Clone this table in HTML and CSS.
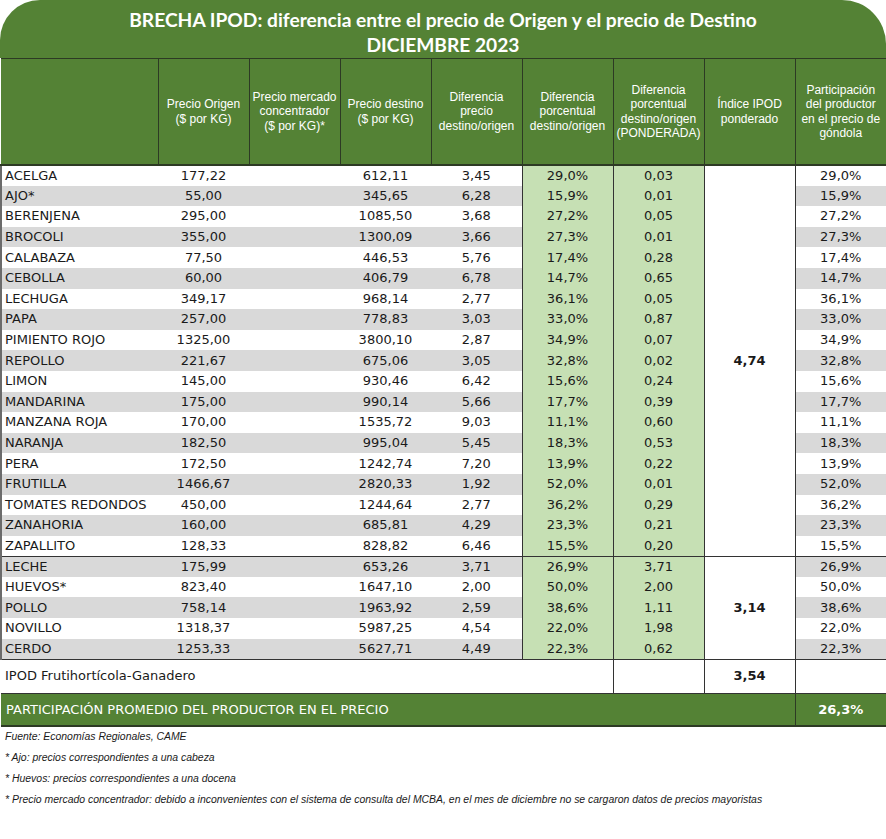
FILE: index.html
```html
<!DOCTYPE html>
<html lang="es">
<head>
<meta charset="utf-8">
<title>BRECHA IPOD</title>
<link rel="stylesheet" href="styles.css">
</head>
<body>
<div class="sheet">
  <div class="title">
    <div>BRECHA IPOD: diferencia entre el precio de Origen y el precio de Destino</div>
    <div>DICIEMBRE 2023</div>
  </div>
  <table class="grid">
    <colgroup>
      <col class="c-name"><col class="c-n"><col class="c-n"><col class="c-n"><col class="c-n"><col class="c-n"><col class="c-n"><col class="c-n"><col class="c-n">
    </colgroup>
    <thead>
      <tr class="head">
        <th></th>
        <th>Precio Origen<br>($ por KG)</th>
        <th>Precio mercado<br>concentrador<br>($ por KG)*</th>
        <th>Precio destino<br>($ por KG)</th>
        <th>Diferencia<br>precio<br>destino/origen</th>
        <th>Diferencia<br>porcentual<br>destino/origen</th>
        <th>Diferencia<br>porcentual<br>destino/origen<br>(PONDERADA)</th>
        <th>Índice IPOD<br>ponderado</th>
        <th>Participación<br>del productor<br>en el precio de<br>góndola</th>
      </tr>
    </thead>
    <tbody>
      <tr><td class="name">ACELGA</td><td>177,22</td><td></td><td>612,11</td><td class="dif">3,45</td><td class="g">29,0%</td><td class="g">0,03</td><td class="ipod" rowspan="19">4,74</td><td class="part">29,0%</td></tr>
      <tr class="alt"><td class="name">AJO*</td><td>55,00</td><td></td><td>345,65</td><td class="dif">6,28</td><td class="g">15,9%</td><td class="g">0,01</td><td class="part">15,9%</td></tr>
      <tr><td class="name">BERENJENA</td><td>295,00</td><td></td><td>1085,50</td><td class="dif">3,68</td><td class="g">27,2%</td><td class="g">0,05</td><td class="part">27,2%</td></tr>
      <tr class="alt"><td class="name">BROCOLI</td><td>355,00</td><td></td><td>1300,09</td><td class="dif">3,66</td><td class="g">27,3%</td><td class="g">0,01</td><td class="part">27,3%</td></tr>
      <tr><td class="name">CALABAZA</td><td>77,50</td><td></td><td>446,53</td><td class="dif">5,76</td><td class="g">17,4%</td><td class="g">0,28</td><td class="part">17,4%</td></tr>
      <tr class="alt"><td class="name">CEBOLLA</td><td>60,00</td><td></td><td>406,79</td><td class="dif">6,78</td><td class="g">14,7%</td><td class="g">0,65</td><td class="part">14,7%</td></tr>
      <tr><td class="name">LECHUGA</td><td>349,17</td><td></td><td>968,14</td><td class="dif">2,77</td><td class="g">36,1%</td><td class="g">0,05</td><td class="part">36,1%</td></tr>
      <tr class="alt"><td class="name">PAPA</td><td>257,00</td><td></td><td>778,83</td><td class="dif">3,03</td><td class="g">33,0%</td><td class="g">0,87</td><td class="part">33,0%</td></tr>
      <tr><td class="name">PIMIENTO ROJO</td><td>1325,00</td><td></td><td>3800,10</td><td class="dif">2,87</td><td class="g">34,9%</td><td class="g">0,07</td><td class="part">34,9%</td></tr>
      <tr class="alt"><td class="name">REPOLLO</td><td>221,67</td><td></td><td>675,06</td><td class="dif">3,05</td><td class="g">32,8%</td><td class="g">0,02</td><td class="part">32,8%</td></tr>
      <tr><td class="name">LIMON</td><td>145,00</td><td></td><td>930,46</td><td class="dif">6,42</td><td class="g">15,6%</td><td class="g">0,24</td><td class="part">15,6%</td></tr>
      <tr class="alt"><td class="name">MANDARINA</td><td>175,00</td><td></td><td>990,14</td><td class="dif">5,66</td><td class="g">17,7%</td><td class="g">0,39</td><td class="part">17,7%</td></tr>
      <tr><td class="name">MANZANA ROJA</td><td>170,00</td><td></td><td>1535,72</td><td class="dif">9,03</td><td class="g">11,1%</td><td class="g">0,60</td><td class="part">11,1%</td></tr>
      <tr class="alt"><td class="name">NARANJA</td><td>182,50</td><td></td><td>995,04</td><td class="dif">5,45</td><td class="g">18,3%</td><td class="g">0,53</td><td class="part">18,3%</td></tr>
      <tr><td class="name">PERA</td><td>172,50</td><td></td><td>1242,74</td><td class="dif">7,20</td><td class="g">13,9%</td><td class="g">0,22</td><td class="part">13,9%</td></tr>
      <tr class="alt"><td class="name">FRUTILLA</td><td>1466,67</td><td></td><td>2820,33</td><td class="dif">1,92</td><td class="g">52,0%</td><td class="g">0,01</td><td class="part">52,0%</td></tr>
      <tr><td class="name">TOMATES REDONDOS</td><td>450,00</td><td></td><td>1244,64</td><td class="dif">2,77</td><td class="g">36,2%</td><td class="g">0,29</td><td class="part">36,2%</td></tr>
      <tr class="alt"><td class="name">ZANAHORIA</td><td>160,00</td><td></td><td>685,81</td><td class="dif">4,29</td><td class="g">23,3%</td><td class="g">0,21</td><td class="part">23,3%</td></tr>
      <tr><td class="name">ZAPALLITO</td><td>128,33</td><td></td><td>828,82</td><td class="dif">6,46</td><td class="g">15,5%</td><td class="g">0,20</td><td class="part">15,5%</td></tr>
      <tr class="alt first"><td class="name">LECHE</td><td>175,99</td><td></td><td>653,26</td><td class="dif">3,71</td><td class="g">26,9%</td><td class="g">3,71</td><td class="ipod" rowspan="5">3,14</td><td class="part">26,9%</td></tr>
      <tr><td class="name">HUEVOS*</td><td>823,40</td><td></td><td>1647,10</td><td class="dif">2,00</td><td class="g">50,0%</td><td class="g">2,00</td><td class="part">50,0%</td></tr>
      <tr class="alt"><td class="name">POLLO</td><td>758,14</td><td></td><td>1963,92</td><td class="dif">2,59</td><td class="g">38,6%</td><td class="g">1,11</td><td class="part">38,6%</td></tr>
      <tr><td class="name">NOVILLO</td><td>1318,37</td><td></td><td>5987,25</td><td class="dif">4,54</td><td class="g">22,0%</td><td class="g">1,98</td><td class="part">22,0%</td></tr>
      <tr class="alt"><td class="name">CERDO</td><td>1253,33</td><td></td><td>5627,71</td><td class="dif">4,49</td><td class="g">22,3%</td><td class="g">0,62</td><td class="part">22,3%</td></tr>
      <tr class="total">
        <td class="label" colspan="6">IPOD Frutihortícola-Ganadero</td>
        <td class="box"></td>
        <td class="box bold">3,54</td>
        <td class="box"></td>
      </tr>
      <tr class="avg">
        <td class="label" colspan="8">PARTICIPACIÓN PROMEDIO DEL PRODUCTOR EN EL PRECIO</td>
        <td class="avgval">26,3%</td>
      </tr>
    </tbody>
  </table>
  <div class="notes">
    <p>Fuente: Economías Regionales, CAME</p>
    <p>* Ajo: precios correspondientes a una cabeza</p>
    <p>* Huevos: precios correspondientes a una docena</p>
    <p>* Precio mercado concentrador: debido a inconvenientes con el sistema de consulta del MCBA, en el mes de diciembre no se cargaron datos de precios mayoristas</p>
  </div>
</div>
</body>
</html>
```

FILE: styles.css
```css
html, body {
  margin: 0;
  padding: 0;
  background: #ffffff;
}

.sheet {
  width: 886px;
}

.title {
  height: 58px;
  box-sizing: border-box;
  padding-top: 7px;
  background: #548235;
  border-radius: 40px 44px 0 0;
  color: #ffffff;
  font-family: Lato, "Open Sans", sans-serif;
  font-weight: 700;
  font-size: 19.2px;
  line-height: 25px;
  text-align: center;
}

.grid {
  width: 886px;
  border-collapse: collapse;
  table-layout: fixed;
  font-family: "DejaVu Sans", Verdana, sans-serif;
  font-size: 13px;
  color: #1a1a1a;
}

.c-name { width: 157px; }
.c-n { width: 91px; }

.head th {
  height: 105px;
  padding: 0;
  background: #548235;
  color: #ffffff;
  font-family: "Liberation Sans", Arial, sans-serif;
  font-weight: 400;
  font-size: 12px;
  line-height: 14.5px;
  text-align: center;
  vertical-align: middle;
  border-left: 1px solid #2d3a24;
  border-top: 1px solid #2d3a24;
  border-bottom: 2px solid #2d3a24;
}

.head th:first-child {
  border-left: none;
}

.grid tbody tr {
  height: 20.6px;
}

.grid td {
  padding: 0;
  text-align: center;
  vertical-align: middle;
  line-height: 16px;
  white-space: nowrap;
}

.grid tr.alt td {
  background: #d9d9d9;
}

.grid td.name {
  text-align: left;
  padding-left: 3px;
  border-left: 2px solid #6b6b6b;
}

.grid td.dif {
  border-right: 1px solid #333333;
}

.grid td.g,
.grid tr.alt td.g {
  background: #c6e0b4;
  border-right: 1px solid #333333;
}

.grid td.ipod,
.grid tr.alt td.ipod {
  background: #ffffff;
  font-weight: 700;
  border-right: 1px solid #333333;
  border-bottom: 1px solid #333333;
}

.grid td.part {
  border-left: 1px solid #333333;
}

.grid tr.first td {
  border-top: 1px solid #333333;
}

.grid tr.total {
  height: 34px;
}

.grid tr.total td {
  border-top: 1px solid #333333;
  border-bottom: 1px solid #333333;
  background: #ffffff;
}

.grid tr.total td.label {
  text-align: left;
  padding-left: 4px;
  border-right: 1px solid #333333;
}

.grid tr.total td.box {
  border-right: 1px solid #333333;
}

.grid td.bold {
  font-weight: 700;
}

.grid tr.avg {
  height: 33px;
}

.grid tr.avg td {
  background: #548235;
  color: #ffffff;
  border-bottom: 2px solid #2d3a24;
}

.grid tr.avg td.label {
  text-align: left;
  padding-left: 5px;
}

.grid tr.avg td.avgval {
  font-weight: 700;
  border-left: 1px solid #2d3a24;
}

.notes {
  padding: 2px 0 0 5px;
  font-family: "Liberation Sans", Arial, sans-serif;
  font-style: italic;
  font-size: 10.45px;
  color: #1a1a1a;
}

.notes p {
  margin: 0;
  height: 21px;
  line-height: 16px;
}
```
